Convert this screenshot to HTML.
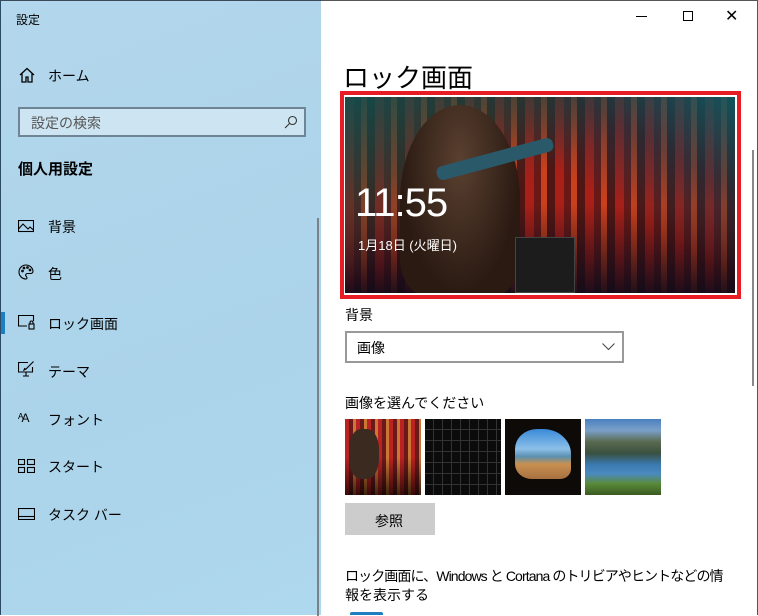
<!DOCTYPE html>
<html><head><meta charset="utf-8"><style>
*{margin:0;padding:0;box-sizing:border-box}
body{width:758px;height:615px;overflow:hidden;position:relative;background:#fff;font-family:"Liberation Sans","Noto Sans CJK JP",sans-serif;color:#000}
.side{position:absolute;left:0;top:0;width:321px;height:615px;background:linear-gradient(160deg,#b3d7ec,#abd3ea 60%,#aed8ee);border-left:1px solid #2a4a66;border-top:1px solid #3a4a58}
.t{position:absolute;white-space:nowrap}
.win{position:absolute;top:0;right:0;width:437px;height:615px;border-top:1px solid #555;border-right:1px solid #555}
.item{position:absolute;left:47px;font-size:14px}
.ic{position:absolute;left:17px}
.img{position:absolute;left:345px;top:97px;width:390px;height:196px;overflow:hidden;background:
linear-gradient(180deg,rgba(0,0,0,0) 55%,rgba(15,10,25,.9) 100%),
repeating-linear-gradient(90deg,#a82018 0 9px,#6a1816 9px 16px,#c8401c 16px 22px,#501614 22px 30px),#600}
.th{position:absolute;top:419px;width:76px;height:76px}
</style></head><body>
<div class="side">
<div class="t" style="left:15px;top:10px;font-size:12px">設定</div>
<svg class="ic" style="left:18px;top:66px" width="16" height="16" viewBox="0 0 16 16" fill="none" stroke="#000" stroke-width="1.3"><path d="M1 8 8 1.5 15 8M3 6.5V15h4v-5h2v5h4V6.5"/></svg>
<div class="item" style="top:65px">ホーム</div>
<div style="position:absolute;left:17px;top:106px;width:288px;height:30px;border:2px solid #6f8595;background:#cde5f3"></div>
<div class="t" style="left:30px;top:112px;font-size:14px;color:#555">設定の検索</div>
<svg style="position:absolute;left:283px;top:114px" width="14" height="14" viewBox="0 0 14 14" fill="none" stroke="#333" stroke-width="1.1"><circle cx="8.5" cy="5.5" r="4"/><path d="M5.5 8.5 1 13"/></svg>
<div class="t" style="left:17px;top:157px;font-size:15px;font-weight:bold">個人用設定</div>
<svg class="ic" style="top:219px" width="16" height="13" viewBox="0 0 16 13" fill="none" stroke="#000" stroke-width="1.1"><rect x=".5" y=".5" width="15" height="11"/><path d="M.5 9 5 4l5 5 2-2 3.5 3"/></svg>
<div class="item" style="top:216px">背景</div>
<svg class="ic" style="top:263px" width="16" height="16" viewBox="0 0 16 16" fill="none" stroke="#000" stroke-width="1.1"><path d="M8 1a7 7 0 1 0 0 14c1.5 0 1-2 0-3s0-2.5 1.5-2.5H13A2.5 2.5 0 0 0 15 7 7 7 0 0 0 8 1z"/><circle cx="4.5" cy="7" r=".8"/><circle cx="6" cy="4" r=".8"/><circle cx="9.5" cy="3.5" r=".8"/><circle cx="12" cy="6" r=".8"/></svg>
<div class="item" style="top:263px">色</div>
<div style="position:absolute;left:0;top:311px;width:4px;height:22px;background:#1e7fc0"></div>
<svg class="ic" style="top:314px" width="17" height="15" viewBox="0 0 17 15" fill="none" stroke="#000" stroke-width="1.1"><path d="M9 11H.5V.5h15V6"/><rect x="11" y="9" width="5" height="5"/><path d="M12 9V7.5a1.5 1.5 0 0 1 3 0V9"/></svg>
<div class="item" style="top:313px">ロック画面</div>
<svg class="ic" style="top:360px" width="17" height="16" viewBox="0 0 17 16" fill="none" stroke="#000" stroke-width="1.1"><path d="M10 1.5H.5V11h14V6M5 15h6M8 11v4M15.5 .5 8 8l-2 1 1-2"/></svg>
<div class="item" style="top:361px">テーマ</div>
<div class="t" style="left:17px;top:410px;font-size:12px;letter-spacing:-2px">ᴬA</div>
<div class="item" style="top:409px">フォント</div>
<svg class="ic" style="top:458px" width="17" height="14" viewBox="0 0 17 14" fill="none" stroke="#000" stroke-width="1.1"><rect x=".5" y=".5" width="6" height="5"/><rect x="9.5" y=".5" width="7" height="5"/><rect x=".5" y="8.5" width="6" height="5"/><rect x="9.5" y="8.5" width="7" height="5"/></svg>
<div class="item" style="top:456px">スタート</div>
<svg class="ic" style="top:507px" width="17" height="12" viewBox="0 0 17 12" fill="none" stroke="#000" stroke-width="1.1"><rect x=".5" y=".5" width="16" height="11"/><path d="M.5 8.5h16"/></svg>
<div class="item" style="top:504px">タスク バー</div>
<div style="position:absolute;left:316px;top:217px;width:2px;height:398px;background:#7a8288"></div>
</div>
<div class="win"></div>
<div style="position:absolute;left:636px;top:16px;width:11px;height:1px;background:#000"></div>
<div style="position:absolute;left:683px;top:11px;width:10px;height:10px;border:1px solid #000"></div>
<div class="t" style="left:725px;top:6px;font-size:16px">✕</div>
<div class="t" style="left:343px;top:58px;font-size:26px">ロック画面</div>
<div style="position:absolute;left:340px;top:91px;width:401px;height:208px;border:4px solid #e81c24;background:#fff"></div>
<div class="img">
<div style="position:absolute;inset:0;background:linear-gradient(150deg,rgba(10,80,80,.9) 0%,rgba(20,70,60,.5) 25%,rgba(0,0,0,0) 45%),linear-gradient(210deg,rgba(10,90,100,.9) 0%,rgba(10,60,80,.5) 22%,rgba(0,0,0,0) 42%)"></div>
<div style="position:absolute;left:55px;top:8px;width:120px;height:190px;border-radius:50% 50% 20% 20%;background:radial-gradient(ellipse at 50% 30%,#5a4030,#2a1a12 70%)"></div>
<div style="position:absolute;left:90px;top:55px;width:120px;height:14px;background:#2a5a6a;transform:rotate(-15deg);border-radius:6px"></div>
<div style="position:absolute;left:170px;top:140px;width:60px;height:56px;background:#1c1c1c;border:1px solid #444"></div>
<div class="t" style="left:10px;top:84px;font-size:40px;color:#fff;font-weight:300;-webkit-text-stroke:0;letter-spacing:-1px">11:55</div>
<div class="t" style="left:13px;top:138px;font-size:13px;color:#fff">1月18日 (火曜日)</div>
</div>
<div class="t" style="left:345px;top:305px;font-size:14px">背景</div>
<div style="position:absolute;left:345px;top:331px;width:279px;height:32px;border:2px solid #999"></div>
<div class="t" style="left:357px;top:338px;font-size:14px">画像</div>
<svg style="position:absolute;left:602px;top:343px" width="13" height="8" viewBox="0 0 13 8" fill="none" stroke="#444"><path d="M.5.5 6.5 6.5 12.5.5"/></svg>
<div class="t" style="left:345px;top:393px;font-size:14px">画像を選んでください</div>
<div class="th" style="left:345px;background:linear-gradient(180deg,rgba(0,0,0,0) 50%,rgba(0,0,0,.7)),repeating-linear-gradient(90deg,#b22 0 4px,#6a1a1a 4px 8px,#c73 8px 11px),#522"><div style="position:absolute;left:4px;top:10px;width:30px;height:50px;border-radius:40%;background:#3a2a20"></div></div>
<div class="th" style="left:425px;background:#0b0b0b;background-image:repeating-linear-gradient(90deg,transparent 0 8px,#333 8px 9px),repeating-linear-gradient(0deg,transparent 0 10px,#333 10px 11px)"></div>
<div class="th" style="left:505px;background:#0d0a08"><div style="position:absolute;left:10px;top:10px;width:56px;height:50px;border-radius:40% 50% 20% 30%;background:linear-gradient(180deg,#3a8ad8 0%,#8cc0e8 40%,#5a90b0 55%,#c89050 70%,#a87040 100%)"></div></div>
<div class="th" style="left:585px;background:linear-gradient(180deg,#4a80c0 0%,#7aa0c8 15%,#5a6a50 30%,#3a5040 45%,#3a7ab0 60%,#4a8ac0 72%,#5a8a3a 85%,#3a5a20 100%)"></div>
<div style="position:absolute;left:345px;top:503px;width:90px;height:32px;background:#ccc"></div>
<div class="t" style="left:375px;top:511px;font-size:14px">参照</div>
<div class="t" style="left:345px;top:566px;font-size:14px;letter-spacing:-0.9px">ロック画面に、Windows と Cortana のトリビアやヒントなどの情</div>
<div class="t" style="left:345px;top:585px;font-size:14px">報を表示する</div>
<div style="position:absolute;left:350px;top:612px;width:33px;height:3px;background:#1e7fc0;border-radius:2px 2px 0 0"></div>
<div style="position:absolute;left:752px;top:150px;width:2px;height:236px;background:#888"></div>
</body></html>
